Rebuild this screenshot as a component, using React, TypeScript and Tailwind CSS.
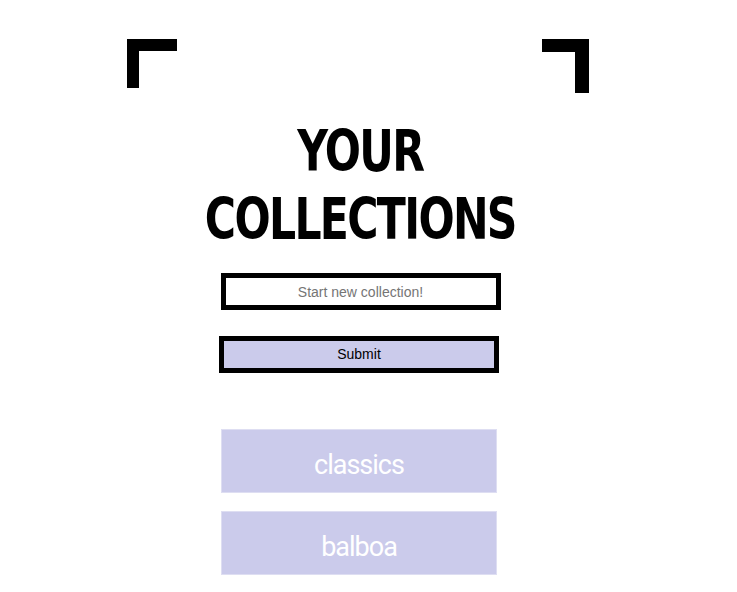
const collections = ['classics', 'balboa'];

export default function App() {
  return (
    <div className="w-[720px] min-h-[592px] bg-white flex flex-col items-center font-['Liberation_Sans',Arial,sans-serif]">
      {/* corner brackets */}
      <div className="w-[720px] pl-[127px] pt-[39px]">
        <div className="w-[462px] flex justify-between items-start">
          <div className="w-[50px] h-[49px] border-l-[12px] border-t-[12px] border-black" />
          <div className="w-[47px] h-[54px] border-r-[14px] border-t-[13px] border-black" />
        </div>
      </div>

      <h1 className="mt-[24px] scale-x-[0.83] text-center font-bold text-[57px] leading-[68px] tracking-[-2px] text-black font-['DejaVu_Sans_Condensed',sans-serif]">
        YOUR
        <br />
        COLLECTIONS
      </h1>

      {/* new collection form */}
      <form className="mt-[20px] flex flex-col items-center" onSubmit={(e) => e.preventDefault()}>
        <input
          placeholder="Start new collection!"
          className="ml-[1px] w-[280px] h-[37px] border-[5px] border-black bg-white text-center text-[14px] text-black placeholder:text-[#757575] outline-none"
        />
        <button
          type="submit"
          className="mt-[26px] mr-[2px] w-[280px] h-[37px] border-[5px] border-black bg-[#cbcbeb] text-[14px] text-black"
        >
          Submit
        </button>
      </form>

      {/* collection list */}
      <div className="mt-[56px] flex flex-col gap-[18px] mr-[2px]">
        {collections.map((name) => (
          <div
            key={name}
            className="w-[276px] h-[64px] pt-[8px] bg-[#cbcbeb] border border-[#dedef2] flex items-center justify-center text-white text-[27px] tracking-[-1px] font-['Roboto',sans-serif]"
          >
            {name}
          </div>
        ))}
      </div>
    </div>
  );
}
